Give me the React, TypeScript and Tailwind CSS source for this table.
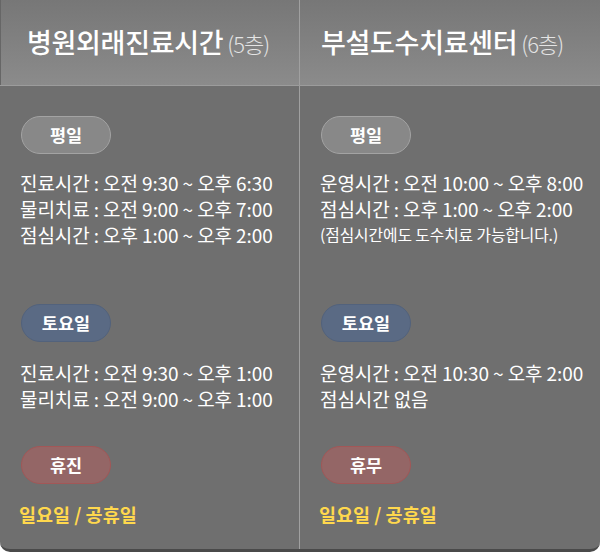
const font = { fontFamily: '"Noto Sans CJK KR", "Noto Sans", sans-serif' };

type Tone = "gray" | "blue" | "red";

const badgeTone: Record<Tone, string> = {
  gray: "bg-[#888888] border-[#a3a3a3]",
  blue: "bg-[#5a6a84] border-[#52627c]",
  red: "bg-[#946666] border-[#a25757]",
};

function Badge({ tone, label }: { tone: Tone; label: string }) {
  return (
    <div
      className={`w-[90px] h-[38px] rounded-full border flex items-center justify-center text-white text-[17.5px] font-bold ${badgeTone[tone]}`}
    >
      {label}
    </div>
  );
}

function Line({ children }: { children: React.ReactNode }) {
  return <p className="text-white text-[19px] leading-[26px] tracking-[-0.1px]">{children}</p>;
}

function Holiday() {
  return <p className="text-[#ffd84d] text-[18.5px] font-bold leading-[26px]">일요일 / 공휴일</p>;
}

export default function App() {
  return (
    <div className="w-[600px] h-[552px] bg-white" style={font}>
      <div className="w-[600px] h-[552px] bg-[#6f6f6f] rounded-b-[10px] border-b-[3px] border-[#4a4a4a] overflow-hidden flex flex-col">
        <div className="h-[86px] flex bg-gradient-to-b from-[#777777] to-[#8b8b8b] border-b border-[#9c9c9c]">
          <div className="w-[300px] flex items-center pl-[26px] border-l border-[#666666] border-r border-r-[#a0a0a0]">
            <span className="text-white text-[27px] font-medium tracking-[-0.3px]">병원외래진료시간</span>
            <span className="text-[#e4e4e4] text-[22px] font-light tracking-[-1px] ml-[4px] mt-[2px]">(5층)</span>
          </div>
          <div className="w-[300px] flex items-center pl-[21px]">
            <span className="text-white text-[27px] font-medium tracking-[-0.3px]">부설도수치료센터</span>
            <span className="text-[#e4e4e4] text-[22px] font-light tracking-[-1px] ml-[4px] mt-[2px]">(6층)</span>
          </div>
        </div>
        <div className="flex flex-1">
          <div className="w-[300px] pl-[21px] pt-[30px] border-r border-[#a0a0a0]">
            <Badge tone="gray" label="평일" />
            <div className="mt-[16px] -ml-[1px]">
              <Line>진료시간 : 오전 9:30 ~ 오후 6:30</Line>
              <Line>물리치료 : 오전 9:00 ~ 오후 7:00</Line>
              <Line>점심시간 : 오후 1:00 ~ 오후 2:00</Line>
            </div>
            <div className="mt-[56px]">
              <Badge tone="blue" label="토요일" />
            </div>
            <div className="mt-[18px] -ml-[1px]">
              <Line>진료시간 : 오전 9:30 ~ 오후 1:00</Line>
              <Line>물리치료 : 오전 9:00 ~ 오후 1:00</Line>
            </div>
            <div className="mt-[34px]">
              <Badge tone="red" label="휴진" />
            </div>
            <div className="mt-[17px] -ml-[2px]">
              <Holiday />
            </div>
          </div>
          <div className="w-[300px] pl-[21px] pt-[30px]">
            <Badge tone="gray" label="평일" />
            <div className="mt-[16px] -ml-[1px]">
              <Line>운영시간 : 오전 10:00 ~ 오후 8:00</Line>
              <Line>점심시간 : 오후 1:00 ~ 오후 2:00</Line>
              <p className="text-white text-[15.8px] leading-[26px] tracking-[-0.1px]">(점심시간에도 도수치료 가능합니다.)</p>
            </div>
            <div className="mt-[56px]">
              <Badge tone="blue" label="토요일" />
            </div>
            <div className="mt-[18px] -ml-[1px]">
              <Line>운영시간 : 오전 10:30 ~ 오후 2:00</Line>
              <Line>점심시간 없음</Line>
            </div>
            <div className="mt-[34px]">
              <Badge tone="red" label="휴무" />
            </div>
            <div className="mt-[17px] -ml-[2px]">
              <Holiday />
            </div>
          </div>
        </div>
      </div>
    </div>
  );
}
